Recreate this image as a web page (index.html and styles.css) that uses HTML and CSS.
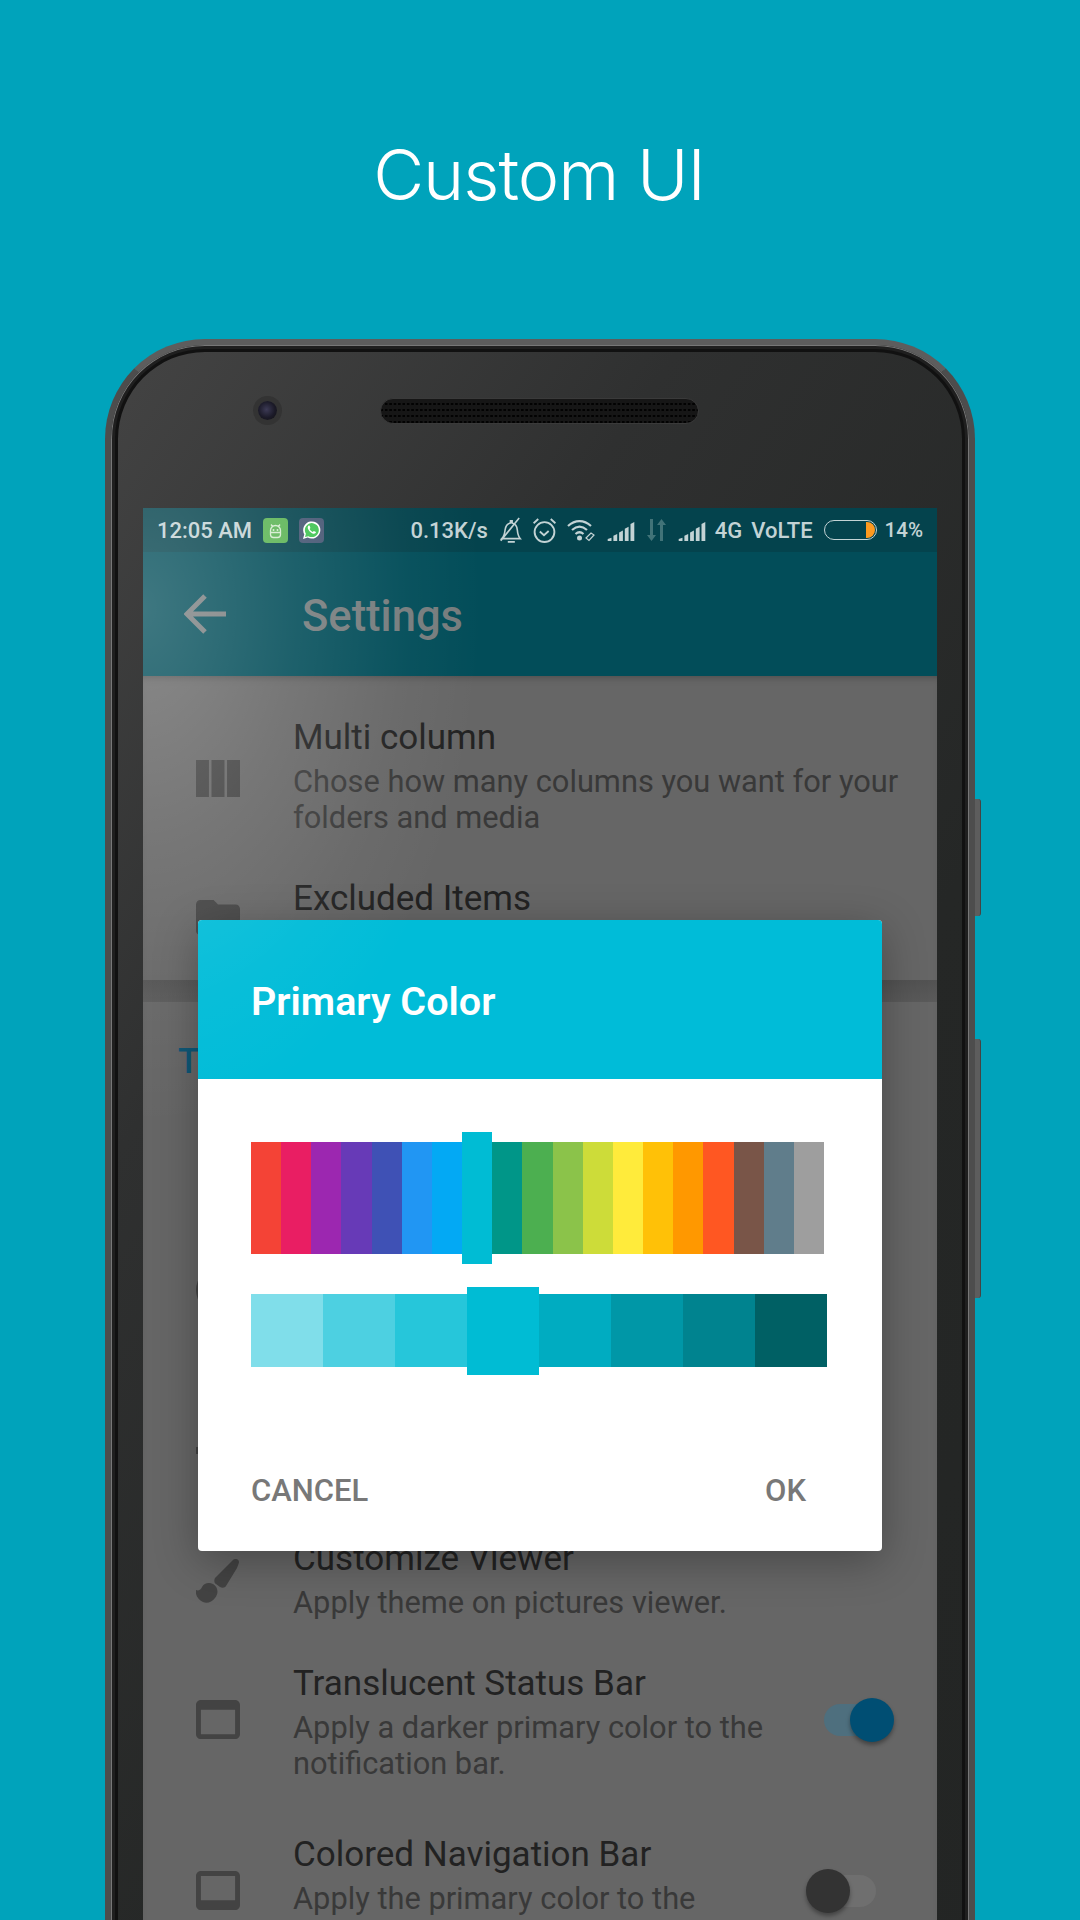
FILE: index.html
```html
<!DOCTYPE html>
<html lang="en">

<head>
    <meta charset="utf-8">
    <title>Custom UI</title>
    <meta name="viewport" content="width=device-width, initial-scale=1">
    <link rel="stylesheet" href="styles.css">
</head>

<body>
    <div class="page">
        <h1 class="headline">Custom UI</h1>

        <div class="phone">
            <div class="side-key side-key-power"></div>
            <div class="side-key side-key-volume"></div>

            <div class="earpiece-row">
                <div class="camera"></div>
                <div class="speaker"></div>
            </div>

            <div class="screen">
                <div class="status-bar">
                    <span class="status-text">12:05 AM</span>
                    <svg class="notif-icon" viewBox="0 0 25 25">
                        <rect width="25" height="25" rx="4" fill="#5cb455" />
                        <path d="M7.500 12.500a5 5 0 0 1 10 0v4a3 3 0 0 1-3 3h-4a3 3 0 0 1-3-3zM8 6.500l2 2.500M17 6.500l-2 2.500M7.500 14.500h10" fill="none" stroke="#d5ecd0" stroke-width="1.300" />
                        <circle cx="10.500" cy="12" r="1" fill="#d5ecd0" />
                        <circle cx="14.500" cy="12" r="1" fill="#d5ecd0" />
                    </svg>
                    <svg class="notif-icon" viewBox="0 0 25 25">
                        <rect width="25" height="25" rx="4" fill="#465673" />
                        <path d="M4 21l1.300-4.700a8.600 8.600 0 1 1 3.400 3.300z" fill="#fff" />
                        <path d="M6 19l.9-3.200a7 7 0 1 1 2.500 2.400z" fill="#3fc351" />
                        <path d="M9.700 7.500c-1.200 1-1.300 2.600-.2 4.300 1.200 2 3 3.500 4.900 3.900 1.300.2 2.400-.5 2.600-1.700l-2.200-1.100-1 1.100c-1.300-.5-2.500-1.600-3.200-3l.8-1-.9-2.400z" fill="#fff" />
                    </svg>

                    <div class="status-right">
                        <span class="status-text">0.13K/s</span>
                        <svg class="status-icon icon-bell" viewBox="1 0 20 24">
                            <path d="M3 20c2-2 2.500-4 3-8 .5-4 2.500-6 5-6.500V3.500h1.500v2c3 .6 4.500 3 4.800 6.500.3 3.500 1 6 2.700 8zM8.500 23h6.500M2 22L19 1" fill="none" stroke="#c3d3d5" stroke-width="1.500" />
                        </svg>
                        <svg class="status-icon icon-alarm" viewBox="1 1 22 24">
                            <circle cx="12" cy="14.500" r="9.500" fill="none" stroke="#c3d3d5" stroke-width="1.800" />
                            <path d="M7.500 14l4 3.500 4.500-4M1.500 6l4.500-4M22.500 6L18 2" fill="none" stroke="#c3d3d5" stroke-width="1.800" />
                        </svg>
                        <svg class="status-icon icon-wifi" viewBox="0 0 29 24">
                            <path d="M1 8c7-6.500 16-6.500 23 0M5 12c4.700-4.200 10.300-4.200 15 0M8.500 16c2.500-2.200 5.500-2.200 8 0" fill="none" stroke="#c3d3d5" stroke-width="2.200" />
                            <circle cx="12.500" cy="20" r="2.500" fill="#c3d3d5" />
                            <path d="M19 20l5-5 3 2-5 5.500z" fill="none" stroke="#c3d3d5" stroke-width="1.200" />
                        </svg>
                        <svg class="status-icon icon-signal" viewBox="0 0 28 20">
                            <path d="M0 20v-2l4-1.500V20zM6 20v-5.500l4-2V20zM12 20v-9l4-2v11zM18 20V7l4-2v15zM24 20V2l4-2v20z" fill="#c3d3d5" />
                        </svg>
                        <svg class="status-icon icon-arrows" viewBox="0 0 21 22">
                            <path d="M7 0v16h3l-4.500 6L1 16h3V0zM14 22V6h-3l4.500-6L20 6h-3v16z" fill="#417378" />
                        </svg>
                        <svg class="status-icon icon-signal" viewBox="0 0 28 20">
                            <path d="M0 20v-2l4-1.500V20zM6 20v-5.500l4-2V20zM12 20v-9l4-2v11zM18 20V7l4-2v15zM24 20V2l4-2v20z" fill="#c3d3d5" />
                        </svg>
                        <span class="status-text status-tight">4G</span>
                        <span class="status-text status-tight">VoLTE</span>
                        <div class="battery"><div class="battery-level"></div></div>
                        <span class="status-text status-percent">14%</span>
                    </div>
                </div>

                <div class="app-bar">
                    <svg class="back-arrow" viewBox="0 0 42 42">
                        <path d="M21 3L3 21l18 18M3 21h39" fill="none" stroke="#7a7f80" stroke-width="5" />
                    </svg>
                    <span class="app-title">Settings</span>
                </div>

                <div class="settings">
                    <div class="row">
                        <svg class="row-icon icon-tall" viewBox="4 5 17 13" preserveAspectRatio="none">
                            <path d="M10 18h5V5h-5v13zm-6 0h5V5H4v13zM16 5v13h5V5h-5z" />
                        </svg>
                        <div class="row-text">
                            <div class="row-title">Multi column</div>
                            <div class="row-sub">Chose how many columns you want for your folders and media</div>
                        </div>
                    </div>

                    <div class="row row-excluded">
                        <svg class="row-icon" viewBox="2 4 20 16">
                            <path d="M10 4H4c-1.100 0-2 .9-2 2v12c0 1.100.9 2 2 2h16c1.100 0 2-.9 2-2V8c0-1.100-.9-2-2-2h-8l-2-2z" />
                        </svg>
                        <div class="row-text">
                            <div class="row-title">Excluded Items</div>
                        </div>
                    </div>

                    <div class="section-divider"></div>
                    <div class="section-title">T</div>

                    <div class="row-covered row-covered-first">
                        <svg class="row-icon" viewBox="0 0 44 44"><circle cx="22" cy="22" r="22" /></svg>
                    </div>
                    <div class="row-covered row-covered-second">
                        <svg class="row-icon" viewBox="0 0 44 7"><rect width="14" height="7" /></svg>
                    </div>

                    <div class="row">
                        <svg class="row-icon" viewBox="0 0 44 44">
                            <path d="M37 1c2-2 6-1 6 2 0 1-1 3-2 6L30 27c-1 2-4 2-6 1l-4-3c-2-1-2-4-1-6zM0 31c2 1 5 0 6-3 2-4 7-5 11-3 5 3 6 9 2 14-3 4-8 6-12 4-5-2-8-7-7-12z" />
                        </svg>
                        <div class="row-text">
                            <div class="row-title">Customize Viewer</div>
                            <div class="row-sub">Apply theme on pictures viewer.</div>
                        </div>
                    </div>

                    <div class="row row-toggle row-spaced">
                        <svg class="row-icon" viewBox="3 4 18 16">
                            <path d="M19 4H5c-1.110 0-2 .9-2 2v12c0 1.100.89 2 2 2h14c1.100 0 2-.89 2-2V6c0-1.100-.89-2-2-2zm0 14H5V8h14v10z" />
                        </svg>
                        <div class="row-text">
                            <div class="row-title">Translucent Status Bar</div>
                            <div class="row-sub">Apply a darker primary color to the notification bar.</div>
                        </div>
                        <div class="toggle toggle-on">
                            <div class="toggle-track"></div>
                            <div class="toggle-thumb"></div>
                        </div>
                    </div>

                    <div class="row row-toggle">
                        <svg class="row-icon" viewBox="3 4 18 16">
                            <path d="M19 4H5C3.900 4 3 4.900 3 6v12c0 1.100.9 2 2 2h14c1.100 0 2-.9 2-2V6c0-1.100-.9-2-2-2zm0 12H5V6h14v10z" />
                        </svg>
                        <div class="row-text">
                            <div class="row-title">Colored Navigation Bar</div>
                            <div class="row-sub">Apply the primary color to the</div>
                        </div>
                        <div class="toggle toggle-off">
                            <div class="toggle-track"></div>
                            <div class="toggle-thumb"></div>
                        </div>
                    </div>
                </div>

                <div class="dialog">
                    <div class="dialog-header">Primary Color</div>
                    <div class="dialog-body">
                        <div class="palette">
                            <div class="swatch c-red"></div>
                            <div class="swatch c-pink"></div>
                            <div class="swatch c-purple"></div>
                            <div class="swatch c-deep-purple"></div>
                            <div class="swatch c-indigo"></div>
                            <div class="swatch c-blue"></div>
                            <div class="swatch c-light-blue"></div>
                            <div class="swatch swatch-picked c-cyan"></div>
                            <div class="swatch c-teal"></div>
                            <div class="swatch c-green"></div>
                            <div class="swatch c-light-green"></div>
                            <div class="swatch c-lime"></div>
                            <div class="swatch c-yellow"></div>
                            <div class="swatch c-amber"></div>
                            <div class="swatch c-orange"></div>
                            <div class="swatch c-deep-orange"></div>
                            <div class="swatch c-brown"></div>
                            <div class="swatch c-blue-grey"></div>
                            <div class="swatch c-grey"></div>
                        </div>
                        <div class="shades">
                            <div class="shade s-200"></div>
                            <div class="shade s-300"></div>
                            <div class="shade s-400"></div>
                            <div class="shade shade-picked c-cyan"></div>
                            <div class="shade s-600"></div>
                            <div class="shade s-700"></div>
                            <div class="shade s-800"></div>
                            <div class="shade s-900"></div>
                        </div>
                    </div>
                    <div class="dialog-actions">
                        <span class="dialog-button">CANCEL</span>
                        <span class="dialog-button">OK</span>
                    </div>
                </div>

                <div class="screen-glare"></div>
            </div>
        </div>
    </div>
</body>

</html>
```

FILE: styles.css
```css
* {
    box-sizing: border-box;
}

body {
    margin: 0;
    background-color: #00a3bb;
    font-family: Roboto, "Liberation Sans", sans-serif;
}

.page {
    width: 1080px;
    height: 1920px;
    overflow: hidden;
}

.headline {
    margin: 0;
    height: 339px;
    padding: 129px 2px 0 0;
    text-align: center;
    color: white;
    font-family: Inter, "Liberation Sans", sans-serif;
    font-size: 70px;
    line-height: 92px;
    font-weight: 300;
    letter-spacing: -1px;
}

/* phone body */
.phone {
    position: relative;
    width: 870px;
    height: 1700px;
    margin-left: 105px;
    padding: 0 32px;
    border: 6px solid #4d4d4d;
    border-top-color: #5d5d5d;
    border-radius: 100px 100px 0 0;
    background: linear-gradient(125deg, #444 0%, #2f3030 28%, #252726 60%, #232524 100%);
    box-shadow: inset 0 0 0 1px #777, inset 0 0 0 4px #1f1f1f, inset 0 0 0 7px #111;
}

.side-key {
    position: absolute;
    left: 864px;
    width: 6px;
    background-color: #5d5d5d;
    border-radius: 0 3px 3px 0;
    border-right: 1px solid #444;
}

.side-key-power {
    top: 454px;
    height: 117px;
}

.side-key-volume {
    top: 694px;
    height: 259px;
}

.earpiece-row {
    display: flex;
    align-items: center;
    height: 163px;
    padding: 0 0 32px 115px;
    gap: 103px;
}

.camera {
    width: 19px;
    height: 19px;
    border-radius: 50%;
    background: radial-gradient(circle at 45% 45%, #3c3a55 0%, #1b1a28 55%, #101010 100%);
    box-shadow: 0 0 0 5px #333;
}

.speaker {
    width: 319px;
    height: 26px;
    border-radius: 13px;
    background-color: #161616;
    background-image: radial-gradient(circle, #020202 1.2px, transparent 1.5px);
    background-size: 4.4px 6px;
    background-position: 3px 2px;
    border: 1px solid #3a3a3a;
}

/* screen */
.screen {
    position: relative;
    height: 1530px;
    background-color: #666;
    overflow: hidden;
}

.screen-glare {
    position: absolute;
    top: 0;
    left: 0;
    width: 100%;
    height: 100%;
    pointer-events: none;
    background: radial-gradient(ellipse 340px 520px at 0 100px, rgba(255, 255, 255, 0.24), rgba(255, 255, 255, 0.11) 45%, rgba(255, 255, 255, 0.03) 78%, rgba(255, 255, 255, 0));
}

.status-bar {
    display: flex;
    align-items: center;
    height: 44px;
    padding: 0 14px;
    gap: 11px;
    background-color: #04434d;
}

.status-text {
    color: #c3d3d5;
    font-size: 22px;
    font-weight: 500;
    white-space: nowrap;
}

.status-tight {
    margin-left: -2px;
}

.status-percent {
    margin-left: -3px;
    font-size: 20.5px;
}

.notif-icon {
    width: 25px;
    height: 25px;
}

.status-right {
    display: flex;
    align-items: center;
    gap: 11px;
    margin-left: auto;
}

.status-icon {
    display: block;
}

.icon-bell {
    width: 23px;
    height: 26px;
}

.icon-alarm {
    width: 23px;
    height: 25px;
}

.icon-wifi {
    width: 29px;
    height: 24px;
}

.icon-signal {
    width: 28px;
    height: 19px;
    margin-top: 3px;
}

.icon-arrows {
    width: 21px;
    height: 22px;
}

.battery {
    width: 53px;
    height: 20px;
    border: 1.5px solid #c3d3d5;
    border-radius: 10px;
    display: flex;
    justify-content: flex-end;
    overflow: hidden;
}

.battery-level {
    width: 9px;
    margin: 1px 1px 1px 0;
    background-color: #ff9a1f;
    border-radius: 0 9px 9px 0;
}

.app-bar {
    display: flex;
    align-items: center;
    height: 124px;
    padding-left: 41px;
    background-color: #024d59;
}

.back-arrow {
    width: 42px;
    height: 42px;
}

.app-title {
    margin-left: 76px;
    padding-top: 5px;
    color: #767c7d;
    font-size: 43.5px;
    font-weight: 500;
}

/* settings list behind the dialog */
.settings {
    padding-top: 21px;
    box-shadow: inset 0 6px 8px -6px rgba(0, 0, 0, 0.35);
}

.row {
    display: flex;
    align-items: center;
    padding: 22px 0 22px 53px;
}

.row-excluded {
    align-items: flex-start;
    height: 122px;
}

.row-excluded .row-icon {
    margin-top: 20px;
}

.row-toggle {
    min-height: 161px;
}

.row-toggle .row-text {
    align-self: flex-start;
}

.row-toggle .row-icon,
.row-toggle .toggle {
    margin-bottom: 8px;
}

.row-spaced {
    margin-bottom: 10px;
}

.row-icon {
    flex: none;
    display: block;
    width: 44px;
    fill: #434343;
}

.icon-tall {
    height: 37px;
    margin-top: 2px;
}

.row-text {
    flex: 1;
    margin-left: 53px;
    padding-right: 20px;
}

.row-title {
    color: #222;
    font-size: 35px;
    line-height: 38px;
}

.row-sub {
    margin-top: 7px;
    color: #393939;
    font-size: 30.8px;
    line-height: 36px;
}

.section-divider {
    height: 22px;
    background: linear-gradient(#525252, #5a5a5a);
}

.section-title {
    height: 79px;
    padding: 41px 0 0 35px;
    color: #0a5575;
    font-size: 35px;
    line-height: 38px;
    font-weight: 500;
}

.row-covered {
    display: flex;
    align-items: center;
    padding-left: 53px;
}

.row-covered-first {
    height: 160px;
    margin-top: 129px;
}

.row-covered-second {
    height: 148px;
    padding-top: 13px;
}

.toggle {
    position: relative;
    flex: none;
    width: 70px;
    height: 44px;
}

.toggle-on {
    margin-right: 43px;
}

.toggle-off {
    margin-right: 61px;
}

.toggle-track {
    position: absolute;
    top: 6px;
    width: 56px;
    height: 32px;
    border-radius: 16px;
}

.toggle-thumb {
    position: absolute;
    top: 0;
    width: 44px;
    height: 44px;
    border-radius: 50%;
    box-shadow: 0 3px 4px rgba(0, 0, 0, 0.35);
}

.toggle-on .toggle-track {
    left: 0;
    background-color: #4e6f7e;
}

.toggle-on .toggle-thumb {
    right: 0;
    background-color: #004e73;
}

.toggle-off .toggle-track {
    right: 0;
    background-color: #6f6f6f;
}

.toggle-off .toggle-thumb {
    left: 0;
    background-color: #333;
}

/* color dialog */
.dialog {
    position: absolute;
    top: 412px;
    left: 55px;
    width: 684px;
    height: 631px;
    border-radius: 4px;
    overflow: hidden;
    background-color: white;
    box-shadow: 0 10px 44px rgba(0, 0, 0, 0.3);
}

.dialog-header {
    height: 159px;
    padding: 59px 0 0 53px;
    background-color: #00bcd8;
    color: white;
    font-size: 39.5px;
    line-height: 46px;
    font-weight: 600;
}

.dialog-body {
    height: 348px;
    padding: 63px 0 0 53px;
}

.palette {
    display: flex;
    width: 573px;
    height: 112px;
}

.swatch {
    flex: 1;
}

.swatch-picked {
    margin: -10px 0;
}

.shades {
    display: flex;
    width: 576px;
    height: 73px;
    margin-top: 40px;
}

.shade {
    flex: 1;
}

.shade-picked {
    margin: -7px 0 -8px;
}

.c-red { background-color: #f44336; }
.c-pink { background-color: #e91e63; }
.c-purple { background-color: #9c27b0; }
.c-deep-purple { background-color: #673ab7; }
.c-indigo { background-color: #3f51b5; }
.c-blue { background-color: #2196f3; }
.c-light-blue { background-color: #03a9f4; }
.c-cyan { background-color: #00bcd4; }
.c-teal { background-color: #009688; }
.c-green { background-color: #4caf50; }
.c-light-green { background-color: #8bc34a; }
.c-lime { background-color: #cddc39; }
.c-yellow { background-color: #ffeb3b; }
.c-amber { background-color: #ffc107; }
.c-orange { background-color: #ff9800; }
.c-deep-orange { background-color: #ff5722; }
.c-brown { background-color: #795548; }
.c-blue-grey { background-color: #607d8b; }
.c-grey { background-color: #9e9e9e; }

.s-200 { background-color: #80deea; }
.s-300 { background-color: #4dd0e1; }
.s-400 { background-color: #26c6da; }
.s-600 { background-color: #00acc1; }
.s-700 { background-color: #0097a7; }
.s-800 { background-color: #00838f; }
.s-900 { background-color: #006064; }

.dialog-actions {
    display: flex;
    justify-content: space-between;
    padding: 0 76px 0 53px;
    margin-top: 46px;
}

.dialog-button {
    color: #787878;
    font-size: 31px;
    line-height: 36px;
    font-weight: 500;
}
```
